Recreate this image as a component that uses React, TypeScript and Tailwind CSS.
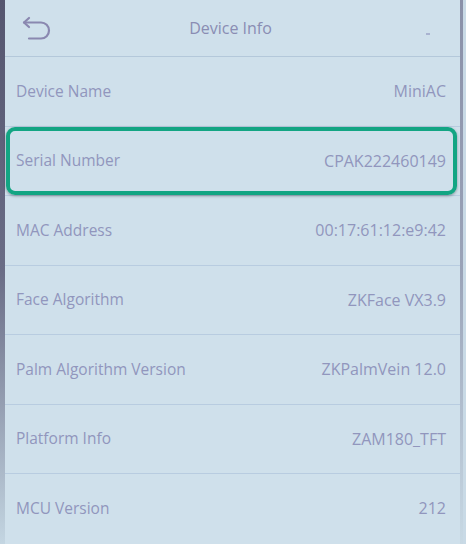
import {Fragment} from 'react';

const rows = [
  {label: 'Device Name', value: 'MiniAC'},
  {label: 'Serial Number', value: 'CPAK222460149', highlight: true},
  {label: 'MAC Address', value: '00:17:61:12:e9:42'},
  {label: 'Face Algorithm', value: 'ZKFace VX3.9'},
  {label: 'Palm Algorithm Version', value: 'ZKPalmVein 12.0'},
  {label: 'Platform Info', value: 'ZAM180_TFT'},
  {label: 'MCU Version', value: '212'}
];

function BackIcon() {
  return (
    <svg width="32" height="28" viewBox="0 0 32 28" fill="none" stroke="#8a88b0" strokeWidth="2.2" strokeLinecap="round" strokeLinejoin="round">
      <path d="M8 2 3 6.5l5 4.5" />
      <path d="M3 6.5h17a8 8 0 0 1 0 16H8" />
    </svg>
  );
}

export default function App() {
  return (
    <div className="w-[466px] h-[544px] overflow-hidden flex bg-[#cfe0eb] font-['Open_Sans',sans-serif]">
      <div className="w-[5px] h-full bg-gradient-to-b from-[#55566f] via-[#6a6d86] to-[#c4d6e2]" />
      <div className="flex-1 flex flex-col">
        <div className="h-[57px] shrink-0 flex items-center relative border-b border-[#b4c8da]">
          <div className="pl-[16px] pt-[4px]">
            <BackIcon />
          </div>
          <div className="flex-1 text-center text-[16px] text-[#8a8db3] pr-[52px]">Device Info</div>
          <div className="absolute right-[30px] top-[33px] w-[4px] h-[2px] bg-[#a9b3d0]" />
        </div>
        {rows.map((r, i) => (
          <Fragment key={r.label}>
            <div className="h-[68.5px] shrink-0 relative flex items-center justify-between pl-[11px] pr-[14px] text-[15.5px] text-[#9196bd]">
              <span>{r.label}</span>
              <span className="text-[16px]">{r.value}</span>
              {r.highlight && (
                <div className="absolute left-[1px] right-[3px] top-0 bottom-0 rounded-[9px] border-[4px] border-[#13a583] shadow-[0_1px_3px_rgba(0,0,0,0.35)]" />
              )}
            </div>
            {i < rows.length - 1 && <div className="h-px shrink-0 bg-[#b8cce0]" />}
          </Fragment>
        ))}
      </div>
      <div className="w-[3px] h-full bg-gradient-to-b from-[#8a90a8] via-[#9aa3b8] to-[#c8d9e4]" />
      <div className="w-[3px] h-full bg-[#c9dae6]" />
    </div>
  );
}
